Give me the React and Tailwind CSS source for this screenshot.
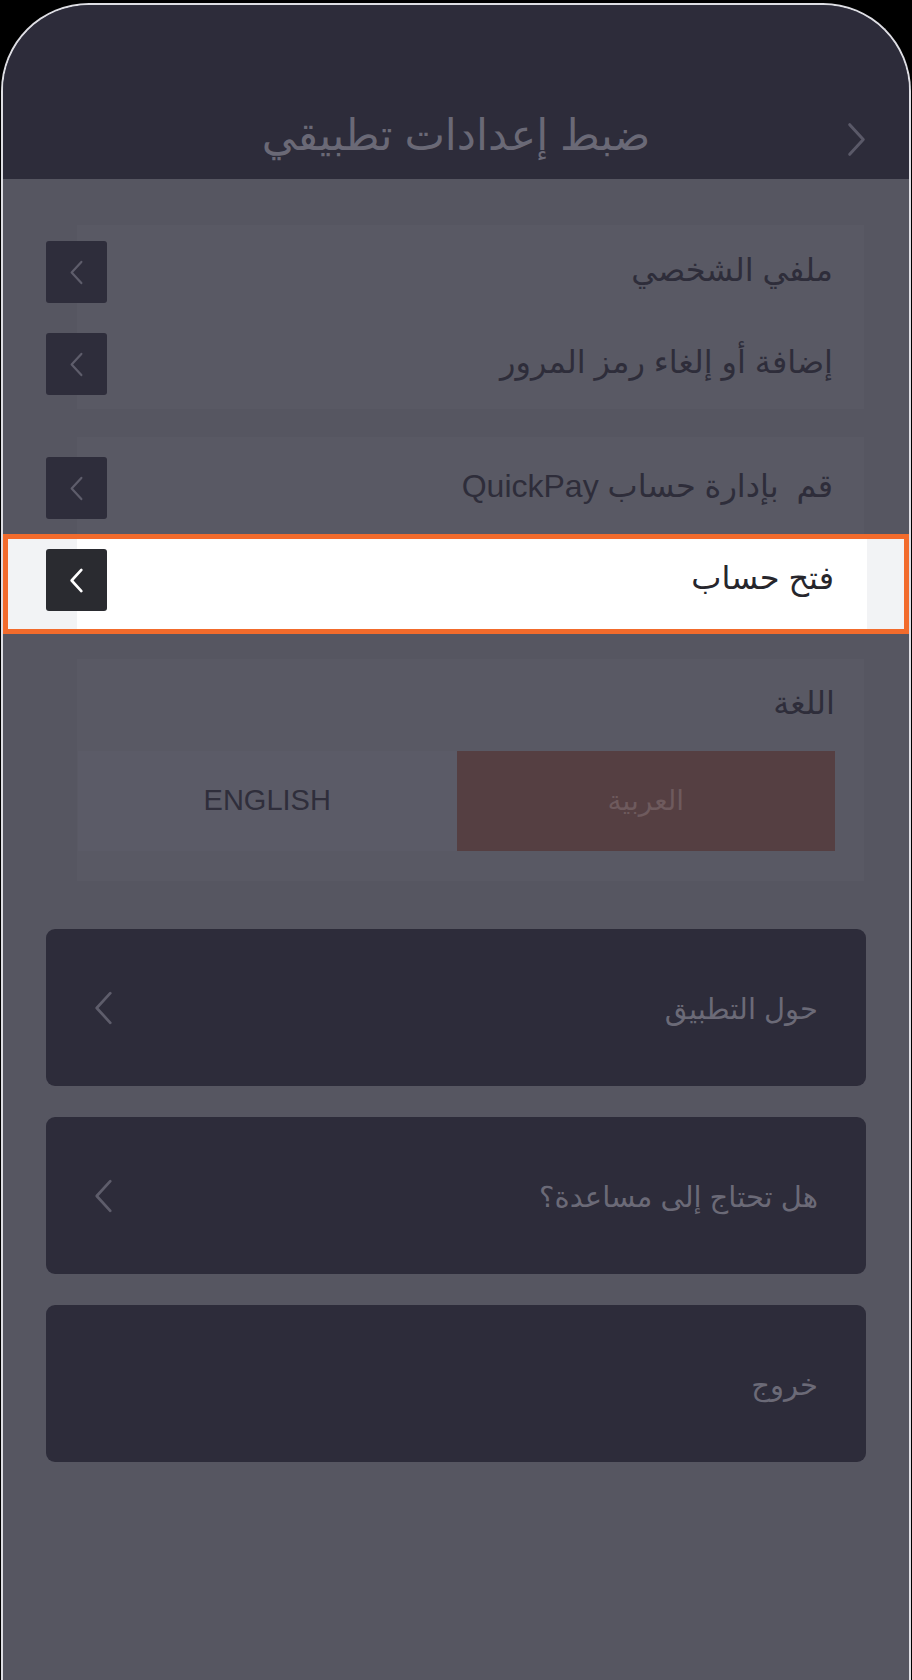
import React from "react";

const font = "font-['Liberation_Sans','DejaVu_Sans',sans-serif]";

function Chevron({ dir = "left", className = "", stroke = "currentColor", width = 2.5 }) {
  const points = dir === "left" ? "14,2 3,14 14,26" : "3,2 14,14 3,26";
  return (
    <svg viewBox="0 0 17 28" className={className} fill="none">
      <polyline points={points} stroke={stroke} strokeWidth={width} strokeLinecap="round" strokeLinejoin="round" />
    </svg>
  );
}

function BoxRow({ label }) {
  return (
    <div className="flex items-center justify-between">
      <div className="-ml-[31px] flex h-[62px] w-[61px] items-center justify-center rounded-[3px] bg-[#2e2d3b]">
        <Chevron className="h-[25px] w-[15px] text-[#5e5d6b]" />
      </div>
      <span dir="rtl" className="mb-[4px] whitespace-pre text-[32px] leading-none text-[#2e2d3a]">{label}</span>
    </div>
  );
}

function DarkCard({ label, chevron = true }) {
  return (
    <div className="flex h-[157px] items-center justify-between rounded-[9px] bg-[#2d2c3a] pl-[47px] pr-[48px]">
      <div className="w-[21px]">
        {chevron ? <Chevron className="h-[38px] w-[21px] text-[#5e5d6b]" width={2.2} /> : null}
      </div>
      <span dir="rtl" className="mt-[4px] text-[29px] leading-none text-[#6b6a77]">{label}</span>
    </div>
  );
}

export default function App() {
  return (
    <div className={`h-[1680px] w-[912px] overflow-hidden bg-black px-[1px] pt-[3px] ${font}`}>
      <div className="h-[1677px] overflow-hidden rounded-t-[88px] border-2 border-b-0 border-[#dedee4] bg-[#565661]">
        {/* header */}
        <div className="h-[174px] bg-[#2d2c3a] pt-[100px]">
          <div className="grid h-[60px] grid-cols-[1fr_auto_1fr] items-center">
            <div />
            <h1 dir="rtl" className="text-[43px] font-normal leading-none text-[#6a6976]">ضبط إعدادات تطبيقي</h1>
            <div className="flex justify-end pr-[42px] pt-[8px]">
              <Chevron dir="right" className="h-[37px] w-[21px] text-[#5a5968]" width={2.4} />
            </div>
          </div>
        </div>

        {/* profile card */}
        <div className="ml-[74px] mr-[45px] mt-[46px] flex h-[184px] flex-col gap-[30px] bg-[#595964] pr-[31px] pt-[16px]">
          <BoxRow label="ملفي الشخصي" />
          <BoxRow label="إضافة أو إلغاء رمز المرور" />
        </div>

        {/* quickpay card */}
        <div className="ml-[74px] mr-[45px] mt-[28px] h-[97px] bg-[#595964] pr-[31px] pt-[20px]">
          <BoxRow label="قم  بإدارة حساب QuickPay" />
        </div>

        {/* highlighted row */}
        <div className="border-[5px] border-[#f26b2c] bg-[#f2f3f5] pl-[69px] pr-[37px]">
          <div className="flex h-[90px] items-center justify-between bg-white pb-[8px] pr-[33px]">
            <div className="-ml-[31px] flex h-[62px] w-[61px] items-center justify-center rounded-[3px] bg-[#2a2b30]">
              <Chevron className="h-[25px] w-[15px] text-white" width={3} />
            </div>
            <span dir="rtl" className="mb-[4px] text-[32px] leading-none text-[#26262c]">فتح حساب</span>
          </div>
        </div>

        {/* language */}
        <div className="ml-[74px] mr-[45px] mt-[25px] h-[222px] bg-[#595964] pl-[1px] pr-[29px] pt-[28px]">
          <div dir="rtl" className="text-[32px] leading-none text-[#2e2d3a]">اللغة</div>
          <div className="mt-[32px] grid h-[100px] grid-cols-2 bg-[#5b5b67]">
            <div className="flex items-center justify-center text-[29px] text-[#2f2e3b]">ENGLISH</div>
            <div dir="rtl" className="flex items-center justify-center bg-[#553f42] text-[28px] text-[#6e5a5d]">العربية</div>
          </div>
        </div>

        {/* bottom cards */}
        <div className="ml-[43px] mr-[43px] mt-[48px] flex flex-col gap-[31px]">
          <DarkCard label="حول التطبيق" />
          <DarkCard label="هل تحتاج إلى مساعدة؟" />
          <DarkCard label="خروج" chevron={false} />
        </div>
      </div>
    </div>
  );
}
